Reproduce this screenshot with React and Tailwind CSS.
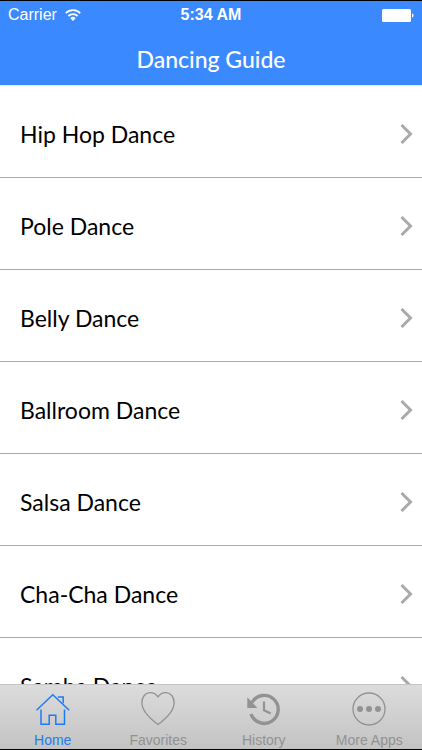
import { useState } from "react";

const dances = [
    "Hip Hop Dance",
    "Pole Dance",
    "Belly Dance",
    "Ballroom Dance",
    "Salsa Dance",
    "Cha-Cha Dance",
    "Samba Dance",
];

function HomeIcon() {
    return (
        <svg width="36" height="36" viewBox="0 0 36 36" fill="none" stroke="currentColor" strokeWidth="1.5" aria-hidden="true">
            <path d="M1.5 18.2 17.8 2.8 34.2 18.2" />
            <path d="M22.8 5.1h5.4v6.2" />
            <path d="M6 17.5v14.8h8.2v-9h6.6v9h8.7V17.5" />
        </svg>
    );
}

function HeartIcon() {
    return (
        <svg width="36" height="36" viewBox="0 0 36 36" fill="none" stroke="currentColor" strokeWidth="1.3" aria-hidden="true">
            <path d="M18 4.8C15.5 1.4 12.5.6 9.8.7 5 1 1.9 5.2 1.9 10.8 1.9 19 8.5 25.6 18 32.5 27.5 25.6 34.1 19 34.1 10.8 34.1 5.2 31 1 26.2.7 23.5.6 20.5 1.4 18 4.8Z" />
        </svg>
    );
}

function HistoryIcon() {
    return (
        <svg width="36" height="36" viewBox="0 0 36 36" fill="none" stroke="currentColor" aria-hidden="true">
            <path d="M6 10.5A14 14 0 1 1 5 22" strokeWidth="3.4" />
            <path d="M1.3 5.2 11.4 15.9H1.3Z" fill="currentColor" stroke="none" />
            <path d="M18 9.5v8.7l6.7 3.4" strokeWidth="2.2" />
        </svg>
    );
}

function MoreIcon() {
    return (
        <svg width="36" height="36" viewBox="0 0 36 36" fill="none" stroke="currentColor" aria-hidden="true">
            <circle cx="18" cy="17" r="16" strokeWidth="1.3" />
            <g fill="currentColor" stroke="none">
                <circle cx="9" cy="17" r="3" />
                <circle cx="18" cy="17" r="3" />
                <circle cx="27" cy="17" r="3" />
            </g>
        </svg>
    );
}

const tabs = [
    { name: "Home", Icon: HomeIcon },
    { name: "Favorites", Icon: HeartIcon },
    { name: "History", Icon: HistoryIcon },
    { name: "More Apps", Icon: MoreIcon },
];

function StatusBar() {
    return (
        <div className="grid grid-cols-3 items-center h-7 px-2 font-['Liberation_Sans',sans-serif]">
            <div className="flex items-center gap-2 text-base">
                <span>Carrier</span>
                <svg width="16" height="12" viewBox="0 0 16 12" fill="none" stroke="currentColor" strokeWidth="1.8" aria-hidden="true">
                    <path d="M.8 4.2a10.2 10.2 0 0 1 14.4 0" />
                    <path d="M3.4 7a6.5 6.5 0 0 1 9.2 0" />
                    <path d="M8 11.9 5.3 9.2a3.8 3.8 0 0 1 5.4 0Z" fill="currentColor" stroke="none" />
                </svg>
            </div>
            <span className="text-center text-base font-bold">5:34 AM</span>
            <svg className="justify-self-end" width="32" height="13" viewBox="0 0 32 13" fill="currentColor" aria-hidden="true">
                <rect width="29" height="13" rx="1.5" />
                <path d="M30 4.5c2 .6 2 3.4 0 4Z" />
            </svg>
        </div>
    );
}

function App() {
    const [active, setActive] = useState("Home");

    return (
        <div className="flex flex-col h-screen bg-white border-y border-black">

            {/* Header */}
            <header className="shrink-0 bg-[#3b89ff] text-white">
                <StatusBar />
                <h1 className="h-14 pt-3 text-center text-[23px] leading-9 font-medium font-['Lato',sans-serif]">Dancing Guide</h1>
            </header>

            {/* Dance list */}
            <main className="flex-1 min-h-0 overflow-y-auto border-t border-[#e4edfa] [scrollbar-width:none]">
                <ul>
                    {dances.map((dance) => (
                        <li key={dance} className="border-b border-[#a9a9a9]">
                            <button
                                type="button"
                                className="flex items-center justify-between w-full h-[91px] pt-1 pl-5 pr-2 text-left text-[23px] leading-9 text-black font-['Lato',sans-serif]"
                            >
                                <span>{dance}</span>
                                <svg className="text-[#aaaaaa]" width="14" height="22" viewBox="0 0 14 22" fill="none" stroke="currentColor" strokeWidth="3" aria-hidden="true">
                                    <path d="M1.5 2 10.5 11 1.5 20" />
                                </svg>
                            </button>
                        </li>
                    ))}
                </ul>
            </main>

            {/* Tab bar */}
            <nav className="shrink-0 grid grid-cols-4 h-16 border-t border-[#c4c4c4] bg-linear-to-b from-[#dcdcdc] to-[#c3c3c3] box-content font-['Liberation_Sans',sans-serif]">
                {tabs.map(({ name, Icon }) => (
                    <button
                        key={name}
                        type="button"
                        onClick={() => setActive(name)}
                        className={`flex flex-col items-center justify-end gap-1 pb-px text-sm leading-4 ${
                            active === name ? "text-[#1f7bf2]" : "text-[#929292]"
                        }`}
                    >
                        <Icon />
                        <span>{name}</span>
                    </button>
                ))}
            </nav>

        </div>
    );
}

export default App;
